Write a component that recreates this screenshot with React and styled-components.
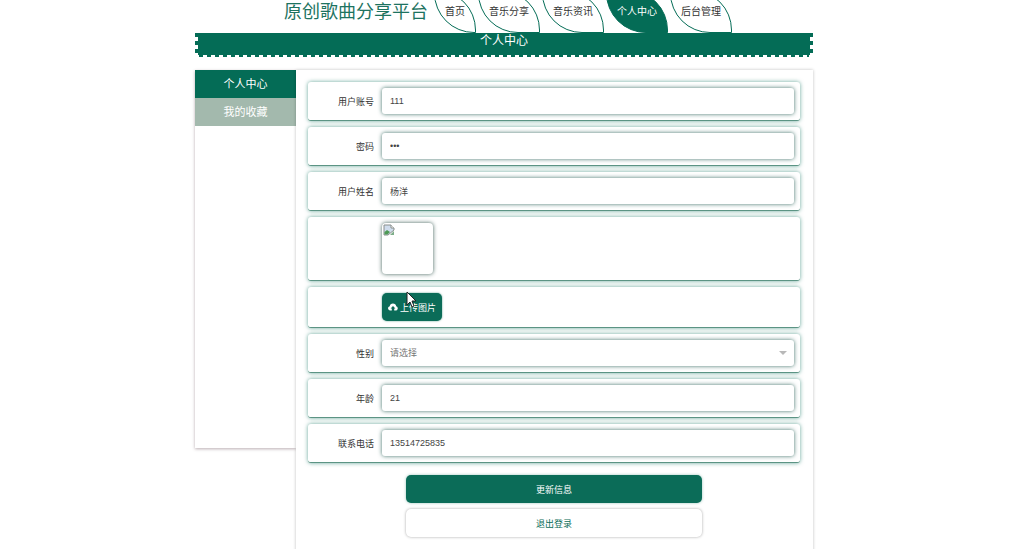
import React, { useState } from 'react';
import styled, { createGlobalStyle } from 'styled-components';

const GlobalStyle = createGlobalStyle`
  * {
    box-sizing: border-box;
  }
  html {
    scrollbar-width: none;
  }
  body {
    margin: 0;
    padding-right: 5px;
    background: #fff;
    color: #333;
    font-family: "Liberation Sans", "Noto Sans CJK SC", sans-serif;
    font-size: 9px;
  }
  input, select, button {
    font: inherit;
  }
`;

const Page = styled.div`
  width: 61vw;
  margin: 0 auto;
`;

const Header = styled.header`
  display: flex;
  justify-content: center;
  align-items: flex-end;
  gap: 6px;
  height: 33px;
  padding-left: 8px;
`;

const Logo = styled.h1`
  margin: 0;
  height: 34px;
  font-size: 18px;
  font-weight: 400;
  line-height: 26px;
  color: #1d735f;
  white-space: nowrap;
`;

const Nav = styled.nav`
  display: flex;
  gap: 2px;
`;

const NavLink = styled.a`
  padding: 0 10px;
  height: 43px;
  border: 1px solid #046c56;
  border-radius: 0 40px 0 40px;
  background: ${(props) => (props.$active ? '#046c56' : '#fff')};
  color: ${(props) => (props.$active ? '#fff' : '#333')};
  font-size: 10px;
  line-height: 41px;
  text-decoration: none;
  white-space: nowrap;
`;

/* green strip with a toothed edge on the left, right and bottom */
const Banner = styled.h2`
  margin: 0;
  height: 24px;
  background:
    linear-gradient(#046c56, #046c56) 3px 0 / calc(100% - 6px) calc(100% - 2px) no-repeat,
    repeating-linear-gradient(90deg, #046c56 0 4px, transparent 4px 8px) 4px 100% / calc(100% - 8px) 3px no-repeat,
    repeating-linear-gradient(180deg, #046c56 0 4px, transparent 4px 8px);
  color: #fff;
  font-size: 12px;
  font-weight: 400;
  line-height: 16px;
  text-align: center;
`;

const Main = styled.main`
  display: flex;
  align-items: flex-start;
  margin-top: 13px;
`;

const Sidebar = styled.aside`
  flex: 0 0 101px;
  height: 378px;
  box-shadow: 0 1px 3px rgba(80, 50, 60, 0.4);
`;

const SideLink = styled.a`
  display: block;
  height: 28px;
  background: ${(props) => (props.$active ? '#046c56' : '#a3b9ad')};
  color: #fff;
  font-size: 11px;
  line-height: 28px;
  text-align: center;
  text-decoration: none;
`;

const Form = styled.form`
  flex: 1;
  padding: 12px 13px 20px 12px;
  background: #fff;
  box-shadow: 0 0 3px rgba(0, 0, 0, 0.25);
`;

const Row = styled.div`
  display: flex;
  align-items: center;
  padding: 6px;
  margin-bottom: 6px;
  border-bottom: 1px solid #5c9484;
  border-radius: 3px;
  background: #fff;
  box-shadow: 0 0 4px rgba(4, 108, 86, 0.6);
`;

const Label = styled.label`
  flex: 0 0 60px;
  margin-right: 8px;
  text-align: right;
`;

const Field = styled.input`
  flex: 1;
  min-width: 0;
  height: 26px;
  padding: 0 8px;
  border: 0;
  border-radius: 3px;
  outline: 0;
  background: #fff;
  color: #444;
  box-shadow: 0 0 4px rgba(20, 80, 70, 0.8);
`;

const SelectBox = styled.div`
  flex: 1;
  display: grid;
  align-items: center;
  > * {
    grid-area: 1 / 1;
  }
`;

const Select = styled(Field)`
  appearance: none;
  color: #777;
`;

const Caret = styled.span`
  justify-self: end;
  margin-right: 7px;
  border: 4px solid transparent;
  border-top-color: #b8b8b8;
  border-bottom: 0;
  pointer-events: none;
`;

const Avatar = styled.div`
  width: 51px;
  height: 51px;
  margin-left: 68px;
  padding: 1px;
  border-radius: 4px;
  box-shadow: 0 0 4px rgba(20, 60, 50, 0.8);
`;

const Upload = styled.button`
  position: relative;
  display: flex;
  align-items: center;
  gap: 2px;
  height: 28px;
  margin-left: 68px;
  padding: 0 6px;
  border: 0;
  border-radius: 5px;
  background: #0b6c58;
  color: #fff;
  white-space: nowrap;
  box-shadow: 0 0 2px rgba(4, 108, 86, 0.7);
`;

const Pointer = styled.svg`
  position: absolute;
  left: 24px;
  top: -2px;
`;

const Actions = styled.div`
  display: flex;
  flex-direction: column;
  gap: 6px;
  width: 60%;
  margin: 12px auto 0;
`;

const Button = styled.button`
  height: 28px;
  border: 0;
  border-radius: 5px;
  background: ${(props) => (props.$primary ? '#0b6c58' : '#fff')};
  color: ${(props) => (props.$primary ? '#fff' : '#0b6c58')};
  box-shadow: 0 0 3px ${(props) => (props.$primary ? 'rgba(4, 108, 86, 0.4)' : 'rgba(0, 0, 0, 0.35)')};
`;

const links = ['首页', '音乐分享', '音乐资讯', '个人中心', '后台管理'];

function BrokenImage() {
  return (
    <svg width="12" height="12" viewBox="0 0 12 12" role="img" aria-label="头像">
      <path d="M1 1h7l3 3v2L5 11H1z" fill="#cfdcec" stroke="#8a8f8c" />
      <path d="M8 1v3h3" fill="#fff" stroke="#8a8f8c" />
      <path d="M1.500 10.500V8L4 6l3 2-2.500 2.500z" fill="#4e9a55" />
      <path d="M7 11l4-4v4z" fill="#7fae8a" />
    </svg>
  );
}

function CloudIcon() {
  return (
    <svg width="10" height="8" viewBox="0 0 10 8" aria-hidden="true">
      <path d="M2.600 7.500A2.200 2.200 0 0 1 1.700 3.200 3.300 3.300 0 0 1 8.200 3.200 2.200 2.200 0 0 1 7.500 7.500H6.200V5.500H7.400L5 3 2.600 5.500H3.800V7.500z" fill="#fff" />
    </svg>
  );
}

export default function App() {
  const [user, setUser] = useState({
    account: '111',
    password: '111',
    name: '杨洋',
    gender: '',
    age: '21',
    phone: '13514725835',
  });

  const bind = (key) => ({
    id: key,
    value: user[key],
    onChange: (e) => setUser({ ...user, [key]: e.target.value }),
  });

  return (
    <>
      <GlobalStyle />
      <Page>
        <Header>
          <Logo>原创歌曲分享平台</Logo>
          <Nav>
            {links.map((text) => (
              <NavLink key={text} href="#" $active={text === '个人中心'}>{text}</NavLink>
            ))}
          </Nav>
        </Header>
        <Banner>个人中心</Banner>
        <Main>
          <Sidebar>
            <SideLink href="#" $active>个人中心</SideLink>
            <SideLink href="#">我的收藏</SideLink>
          </Sidebar>
          <Form onSubmit={(e) => e.preventDefault()}>
            <Row>
              <Label htmlFor="account">用户账号</Label>
              <Field {...bind('account')} />
            </Row>
            <Row>
              <Label htmlFor="password">密码</Label>
              <Field type="password" {...bind('password')} />
            </Row>
            <Row>
              <Label htmlFor="name">用户姓名</Label>
              <Field {...bind('name')} />
            </Row>
            <Row>
              <Avatar><BrokenImage /></Avatar>
            </Row>
            <Row>
              <Upload type="button">
                <CloudIcon />
                上传图片
                <Pointer width="12" height="18" viewBox="0 0 12 18" aria-hidden="true">
                  <path d="M1 1v13l3-3 2 5 2-1-2-5h4z" fill="#fff" stroke="#222" />
                </Pointer>
              </Upload>
            </Row>
            <Row>
              <Label htmlFor="gender">性别</Label>
              <SelectBox>
                <Select as="select" {...bind('gender')}>
                  <option value="">请选择</option>
                  <option value="男">男</option>
                  <option value="女">女</option>
                </Select>
                <Caret />
              </SelectBox>
            </Row>
            <Row>
              <Label htmlFor="age">年龄</Label>
              <Field {...bind('age')} />
            </Row>
            <Row>
              <Label htmlFor="phone">联系电话</Label>
              <Field {...bind('phone')} />
            </Row>
            <Actions>
              <Button type="submit" $primary>更新信息</Button>
              <Button type="button">退出登录</Button>
            </Actions>
          </Form>
        </Main>
      </Page>
    </>
  );
}
